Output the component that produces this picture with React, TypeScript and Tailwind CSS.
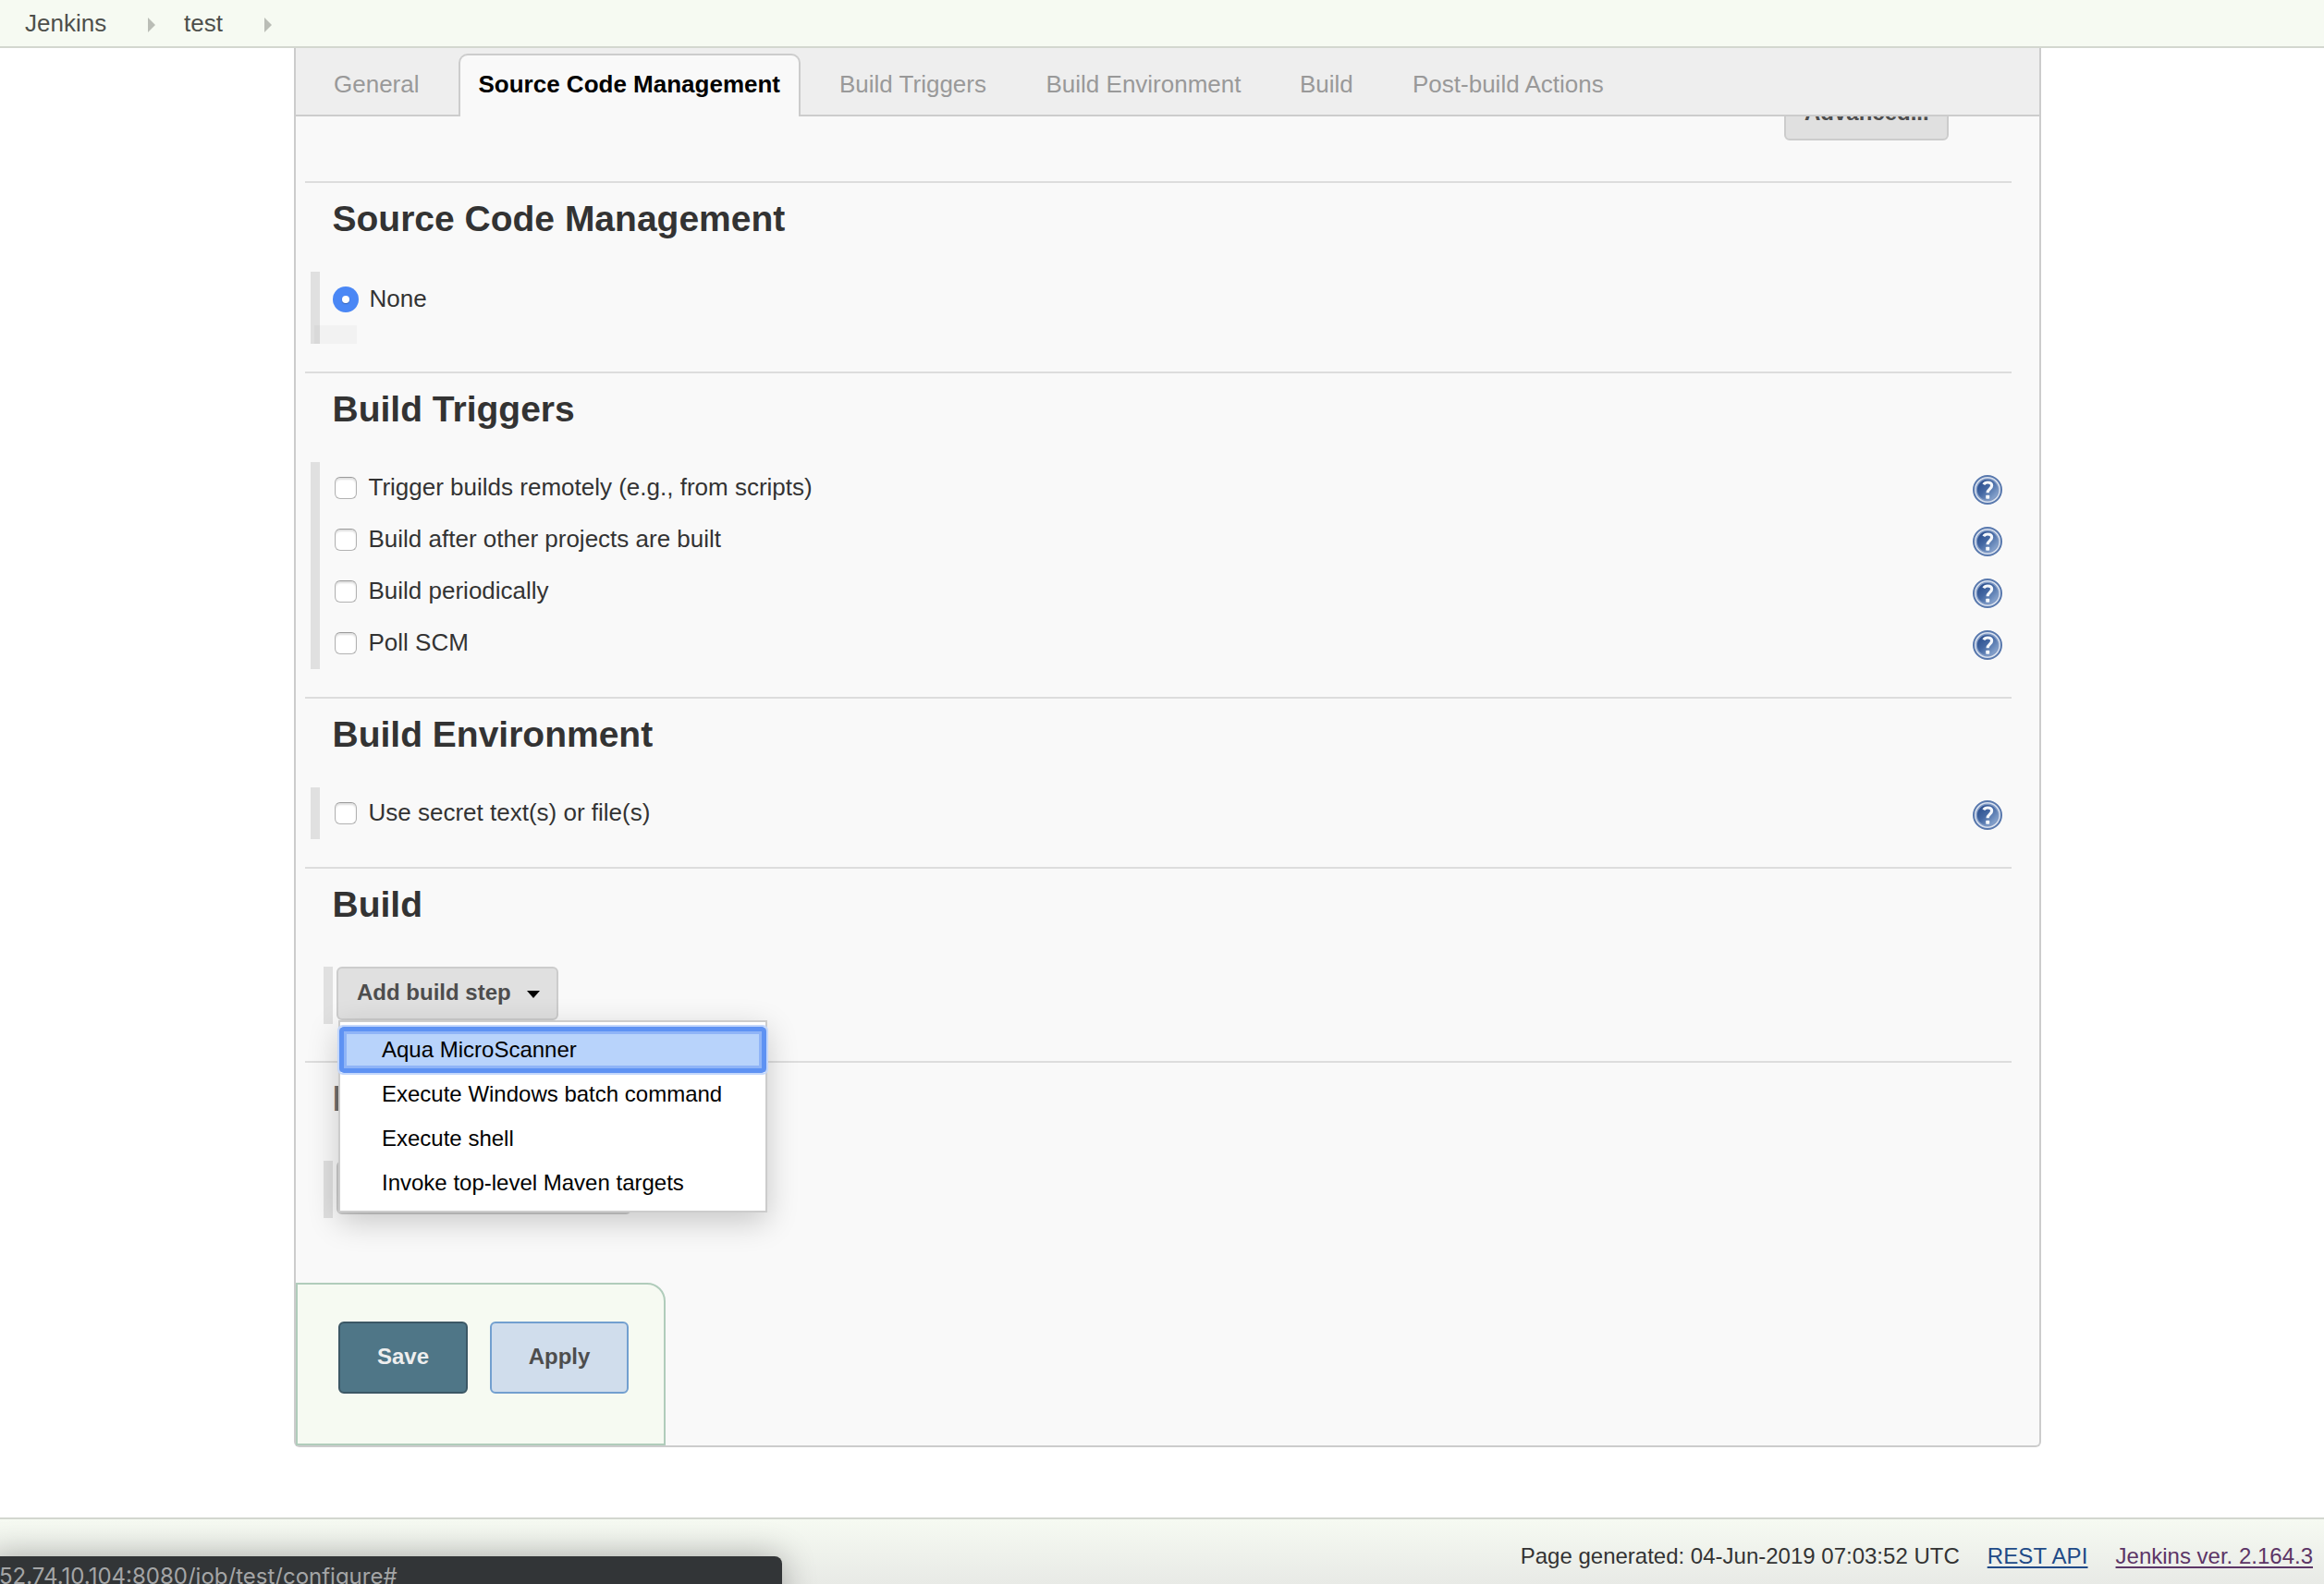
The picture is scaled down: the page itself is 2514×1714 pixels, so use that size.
import React from "react";

function Help({ className = "" }: { className?: string }) {
  return (
    <svg viewBox="0 0 32 32" className={`h-8 w-8 ${className}`}>
      <defs>
        <linearGradient id="helpFill" x1="0" y1="0" x2="1" y2="1">
          <stop offset="0.1" stopColor="#2a4d8c" />
          <stop offset="0.45" stopColor="#4468a3" />
          <stop offset="0.95" stopColor="#98b3d8" />
        </linearGradient>
      </defs>
      <circle cx="16" cy="16" r="15" fill="#d9e1ee" stroke="#5878ad" strokeWidth="2" />
      <circle cx="16" cy="16" r="11.8" fill="url(#helpFill)" stroke="#7f99c4" strokeWidth="1.4" />
      <path d="M11.8 10.300c1-1.700 2.400-2.300 4.300-2.300 2.900 0 4.500 1.400 4.500 3.500 0 3.500-4.500 3.900-4.500 7.700" fill="none" stroke="#f4f7fb" strokeWidth="3.200" />
      <rect x="14.200" y="21.700" width="4" height="4" rx="0.800" fill="#f4f7fb" />
    </svg>
  );
}

function Crumb() {
  return (
    <svg viewBox="0 0 8 16" className="h-4 w-2">
      <path d="M0 0L8 8L0 16Z" fill="#babdb6" />
    </svg>
  );
}

function Heading({ children, tone = "text-[#333]" }: { children: React.ReactNode; tone?: string }) {
  return (
    <h2 className={`h-[98px] border-t-2 border-[#ddd] pt-[16px] pl-[29.5px] text-[39px] leading-[46px] font-bold whitespace-nowrap ${tone}`}>
      {children}
    </h2>
  );
}

function Option({ label }: { label: string }) {
  return (
    <div className="flex h-14 items-start pt-[14px] pr-[10px] pl-4">
      <span className="mt-[2px] h-6 w-6 shrink-0 rounded-[6px] border-[1.500px] border-[#b2b2b2] border-t-[#9a9a9a] bg-white shadow-[inset_0_2px_2px_rgba(0,0,0,0.13)]" />
      <span className="-mt-[2px] ml-[12.5px] grow leading-[30px]">{label}</span>
      <Help />
    </div>
  );
}

function StepButton({ label, width }: { label: string; width: string }) {
  return (
    <div className={`flex h-[58px] items-center rounded-[6px] border-2 border-[#ccc] bg-[#e0e0e0] pb-[2px] pl-5 text-[24px] font-bold text-[#4d4d4d] ${width}`}>
      <span className="whitespace-nowrap">{label}</span>
      <svg viewBox="0 0 14 8" className="mt-[4px] ml-[17px] h-2 w-[14px]">
        <path d="M0 0H14L7 8Z" fill="#000" />
      </svg>
    </div>
  );
}

const triggers = [
  "Trigger builds remotely (e.g., from scripts)",
  "Build after other projects are built",
  "Build periodically",
  "Poll SCM",
];

const steps = ["Execute Windows batch command", "Execute shell", "Invoke top-level Maven targets"];

export default function App() {
  return (
    <div className="relative flex h-[1714px] w-[2514px] flex-col overflow-hidden bg-white font-['Liberation_Sans',Arial,sans-serif] text-[26px] text-[#333]">
      <header className="flex h-[52px] shrink-0 items-center border-b-2 border-[#d3d7cf] bg-[#f6faf2] pl-[27px] leading-[30px] text-[#4d4f4b]">
        <span className="w-[133px]">Jenkins</span>
        <span className="mt-1 w-[39px]"><Crumb /></span>
        <span className="w-[87px]">test</span>
        <span className="mt-1"><Crumb /></span>
      </header>

      <main className="ml-[318px] flex h-[1514px] w-[1890px] shrink-0 flex-col rounded-b-[6px] border-x-2 border-b-2 border-[#ccc] bg-[#f9f9f9]">
        <nav className="flex h-[74px] shrink-0 items-end bg-[#eee] leading-[30px] whitespace-nowrap text-[#999]">
          <span className="h-[74px] w-[176px] border-b-2 border-[#ccc] pt-[24px] pl-[41px]">General</span>
          <span className="h-[68px] w-[370px] rounded-t-[10px] border-2 border-b-0 border-[#ccc] bg-[#f9f9f9] pt-[16px] pl-[19.5px] font-bold text-black">Source Code Management</span>
          <div className="flex h-[74px] grow border-b-2 border-[#ccc] pt-[24px] pl-[42px]">
            <span className="w-[223.5px]">Build Triggers</span>
            <span className="w-[274.5px]">Build Environment</span>
            <span className="w-[122px]">Build</span>
            <span>Post-build Actions</span>
          </div>
        </nav>

        <div className="flex h-[70px] shrink-0 items-start justify-end overflow-hidden pr-[98px]">
          <div className="-mt-[32px] h-[58px] w-[178px] rounded-[6px] border-2 border-[#ccc] bg-[#e0e0e0] pt-[12px] pl-[20px] text-[24px] leading-[28px] font-bold text-[#4d4d4d]">Advanced...</div>
        </div>

        <div className="ml-[10px] flex w-[1846px] shrink-0 flex-col">
          <Heading>Source Code Management</Heading>
          <div className="ml-[6px] mb-[30px] h-[78px] border-l-[10px] border-[#e0e0e0]">
            <div className="flex h-[58px] items-center pl-[14px]">
              <span className="mt-[2px] flex h-7 w-7 items-center justify-center rounded-full bg-[#4a87f5]">
                <span className="h-2 w-2 rounded-full bg-white shadow-[0_1px_1px_rgba(0,0,0,0.25)]" />
              </span>
              <span className="ml-[11.5px]">None</span>
            </div>
            <div className="-ml-[6px] h-5 w-[46px] bg-black/[0.027]" />
          </div>

          <Heading>Build Triggers</Heading>
          <div className="mb-[30px] ml-[6px] border-l-[10px] border-[#e0e0e0]">
            {triggers.map((t) => <Option key={t} label={t} />)}
          </div>

          <Heading>Build Environment</Heading>
          <div className="mb-[30px] ml-[6px] border-l-[10px] border-[#e0e0e0]">
            <Option label="Use secret text(s) or file(s)" />
          </div>

          <Heading>Build</Heading>
          <div className="relative mt-[10px] mb-[40px] ml-[20px] h-[62px] border-l-[10px] border-[#e0e0e0] pl-1">
            <StepButton label="Add build step" width="w-[240px]" />
            <div className="absolute top-[58px] left-[6px] z-10 w-[464px] border-2 border-[#ccc] bg-white py-[6px] text-[24px] leading-[47px] text-black shadow-[0_10px_32px_rgba(0,0,0,0.2)]">
              <div className="relative h-12 bg-[#b8d3fb] pl-[45px]">
                <div className="absolute -inset-x-[3px] -top-[3px] -bottom-[3px] rounded-[6px] border-2 border-[#c3d7fb]">
                  <div className="h-full rounded-[5px] border-[5px] border-[#5e92f3]">
                    <div className="h-full border-[3px] border-[#8fb4f7]" />
                  </div>
                </div>
                <span className="relative">Aqua MicroScanner</span>
              </div>
              {steps.map((s) => <div key={s} className="h-12 pl-[45px]">{s}</div>)}
            </div>
          </div>

          <Heading tone="text-[#6e6e6e]">Post-build Actions</Heading>
          <div className="mt-[10px] ml-[20px] h-[62px] border-l-[10px] border-[#e0e0e0] pl-1">
            <StepButton label="Add post-build action" width="w-[319px]" />
          </div>
        </div>

        <div className="mt-auto flex h-[176px] w-[400px] shrink-0 gap-6 rounded-tr-[20px] border-2 border-[#b0ccbb] bg-[#f6faf2] pt-10 pl-11 text-[24px] font-bold">
          <div className="flex h-[78px] w-[140px] items-center justify-center rounded-[6px] border-2 border-[#3c5765] bg-[#4f7687] pb-[2px] text-[#eee]">Save</div>
          <div className="flex h-[78px] w-[150px] items-center justify-center rounded-[6px] border-2 border-[#729fcf] bg-[#d0ddec] pb-[2px] text-[#4d4d4d]">Apply</div>
        </div>
      </main>

      <footer className="relative mt-auto flex h-[72px] shrink-0 items-start justify-end overflow-hidden border-t-2 border-[#d3d7cf] bg-linear-to-b from-[#f6faf2] to-[#e8eae6] pt-[26px] pr-[12px] text-[24px] leading-[28px]">
        <span className="mr-[30px]">Page generated: 04-Jun-2019 07:03:52 UTC</span>
        <span className="mr-[30px] tracking-[0.15px] text-[#204a87] underline decoration-2 underline-offset-[3px]">REST API</span>
        <span className="text-[#5c3566] underline decoration-2 underline-offset-[3px]">Jenkins ver. 2.164.3</span>
        <div className="absolute top-[40px] -left-[10px] h-[60px] w-[856px] rounded-tr-[8px] bg-[#323537] pt-[7px] pl-[9px] font-[Inter,sans-serif] text-[24px] leading-[30px] text-[#a4a5a6] shadow-[0_0_36px_rgba(0,0,0,0.3)]">
          52.74.10.104:8080/job/test/configure#
        </div>
      </footer>
    </div>
  );
}
